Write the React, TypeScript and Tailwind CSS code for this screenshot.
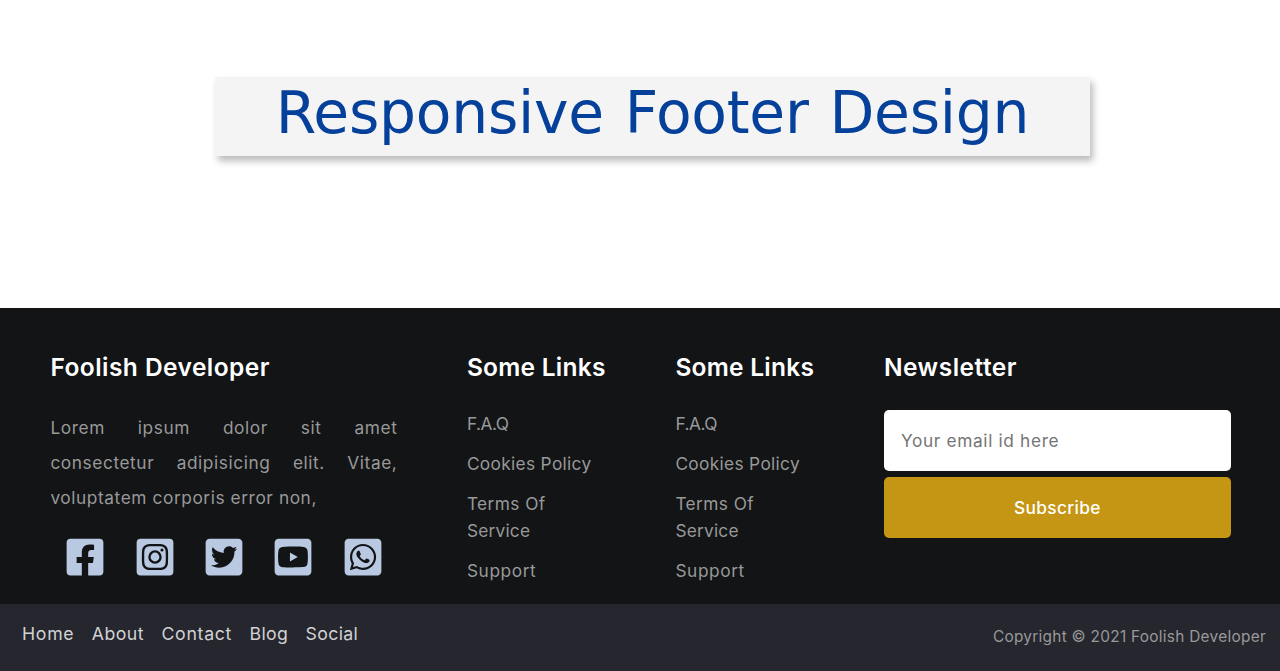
import React from "react";
import {
  FaFacebookSquare,
  FaInstagramSquare,
  FaTwitterSquare,
  FaYoutubeSquare,
  FaWhatsappSquare,
} from "react-icons/fa";

const socials = [
  { name: "Facebook", Icon: FaFacebookSquare },
  { name: "Instagram", Icon: FaInstagramSquare },
  { name: "Twitter", Icon: FaTwitterSquare },
  { name: "YouTube", Icon: FaYoutubeSquare },
  { name: "WhatsApp", Icon: FaWhatsappSquare },
];

function Heading({ children, className }: { children: React.ReactNode; className: string }) {
  return (
    <h2 className={`h-[38px] whitespace-nowrap text-[24.5px] font-semibold leading-[38px] text-white ${className}`}>
      {children}
    </h2>
  );
}

function LinkColumn() {
  return (
    <div>
      <Heading className="tracking-[0.25px]">Some Links</Heading>
      <ul className="mt-[25px] flex flex-col gap-[14px] whitespace-nowrap text-[17.3px] leading-[26.2px] text-[#999]">
        <li><a href="#" className="tracking-[-0.45px]">F.A.Q</a></li>
        <li><a href="#" className="tracking-[0.33px]">Cookies Policy</a></li>
        <li>
          <a href="#">
            <span className="tracking-[0.42px]">Terms Of</span>
            <br />
            <span className="tracking-[0.22px]">Service</span>
          </a>
        </li>
        <li><a href="#" className="tracking-[0.6px]">Support</a></li>
      </ul>
    </div>
  );
}

export default function App() {
  return (
    <div className="flex h-[671px] w-full flex-col overflow-hidden bg-white font-['Inter',sans-serif]">
      <header className="h-[308px] shrink-0 pl-[215px] pt-[77px]">
        <h1 className="h-[79px] w-[875px] whitespace-nowrap bg-[#f4f4f4] text-center font-['DejaVu_Sans',sans-serif] text-[58.3px] leading-[73px] tracking-[-0.25px] text-[#05409a] shadow-[3px_5px_7px_rgba(0,0,0,0.27)] [word-spacing:2.5px]">
          Responsive Footer Design
        </h1>
      </header>
      <footer className="flex flex-1 flex-col bg-[#121416]">
        <div className="grid h-[296px] grid-cols-[347px_139px_139px_347px] gap-x-[69.5px] pl-[50.4px] pt-[40px]">
          <div>
            <Heading className="tracking-[0.45px]">Foolish Developer</Heading>
            <p className="mt-[24px] whitespace-nowrap text-[17.3px] leading-[35px] tracking-[0.58px] text-[#999]">
              <span className="block [text-align-last:justify]">Lorem ipsum dolor sit amet</span>
              <span className="block [text-align-last:justify]">consectetur adipisicing elit. Vitae,</span>
              <span className="block">voluptatem corporis error non,</span>
            </p>
            <div className="mt-[21px] flex">
              {socials.map(({ name, Icon }) => (
                <a key={name} href="#" aria-label={name} className="flex flex-1 justify-center text-[#b9c9e2]">
                  <Icon size={42} />
                </a>
              ))}
            </div>
          </div>
          <LinkColumn />
          <LinkColumn />
          <div>
            <Heading className="tracking-[0.5px]">Newsletter</Heading>
            <input
              type="email"
              placeholder="Your email id here"
              className="mt-[24.4px] block h-[61px] w-full rounded-[5px] bg-white px-[17px] text-[17.3px] tracking-[0.65px] placeholder:text-[#757575]"
            />
            <button className="mt-[6px] block h-[61px] w-full rounded-[5px] bg-[#c49613] text-[17.3px] font-medium tracking-[0.35px] text-white">
              Subscribe
            </button>
          </div>
        </div>
        <div className="flex flex-1 justify-between bg-[#25262e] pl-[22px] pr-[14px]">
          <nav className="flex h-[60px] items-center gap-[17.5px] text-[17.7px] text-[#d2d2d4]">
            <a href="#" className="tracking-[0.7px]">Home</a>
            <a href="#" className="tracking-[0.45px]">About</a>
            <a href="#" className="tracking-[0.7px]">Contact</a>
            <a href="#" className="tracking-[0.3px]">Blog</a>
            <a href="#" className="tracking-[0.35px]">Social</a>
          </nav>
          <p className="h-[65px] text-[15.4px] leading-[65px] tracking-[0.28px] text-[#999]">Copyright © 2021 Foolish Developer</p>
        </div>
      </footer>
    </div>
  );
}
